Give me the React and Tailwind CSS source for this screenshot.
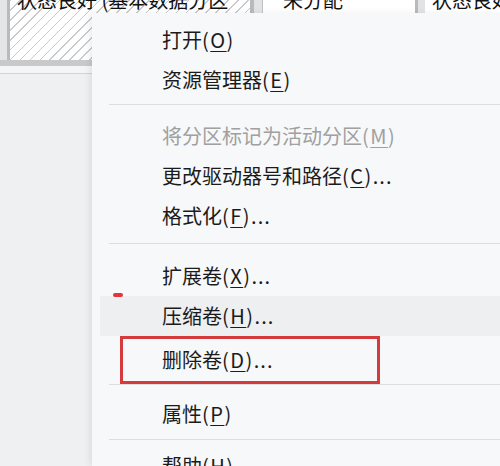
import React from "react";

const menuFont = { fontFamily: '"Noto Sans CJK SC", "Noto Sans", sans-serif' };

function Key({ k, tail = "" }) {
  return (
    <span>
      <span className="tracking-[1.5px]">
        (<span className="underline underline-offset-[3px] decoration-[1px]">{k}</span>)
      </span>
      <span className="tracking-[1px]">{tail}</span>
    </span>
  );
}

function Item({ label, k, tail = "", disabled = false, className = "" }) {
  return (
    <div
      className={`h-[40px] flex items-center pl-[70px] text-[20px] leading-none ${
        disabled ? "text-[#a0a0a0]" : "text-[#1b1b1b]"
      } ${className}`}
    >
      <span>
        {label}
        <Key k={k} tail={tail} />
      </span>
    </div>
  );
}

function Sep({ top, h }) {
  return (
    <div className={`${h} ${top} ml-[17px]`}>
      <div className="h-px bg-[#dddee0]" />
    </div>
  );
}

export default function App() {
  return (
    <div className="relative w-[500px] h-[466px] overflow-hidden bg-[#eef0f2]" style={menuFont}>
      {/* disk map underneath */}
      <div className="flex h-[60px] bg-white">
        <div className="w-[10px] bg-[#e4e5e7] border-r-[3px] border-[#b9babc]" />
        <div className="w-[240px] overflow-hidden bg-[repeating-linear-gradient(135deg,#c9cacc_0px,#c9cacc_1px,#ffffff_1px,#ffffff_7px)]">
          <div className="mt-[-10px] pl-[7px] text-[20px] leading-none whitespace-nowrap text-[#111]">
            状态良好 (基本数据分区
          </div>
        </div>
        <div className="w-[4px] bg-[#b9babc]" />
        <div className="w-[8px] bg-[#e2e3e5]" />
        <div className="w-[153px] overflow-hidden bg-white border-l border-[#c0c0c0]">
          <div className="mt-[-10px] pl-[20px] text-[20px] leading-none whitespace-nowrap text-[#111]">
            未分配
          </div>
        </div>
        <div className="w-[10px] bg-[#e2e3e5] border-l-[3px] border-[#b9babc]" />
        <div className="flex-1 overflow-hidden bg-white">
          <div className="mt-[-10px] pl-[7px] text-[20px] leading-none whitespace-nowrap text-[#111]">
            状态良好
          </div>
        </div>
      </div>
      <div className="h-[6px] bg-[#c8c9cb]" />
      <div className="h-[7px] bg-[#f4f5f6]" />
      <div className="h-px bg-[#d3d4d6]" />

      {/* context menu */}
      <div className="absolute left-[92px] top-[13px] right-0 bottom-0 bg-[#f7f8fa] shadow-[-3px_0_6px_rgba(0,0,0,0.07)] pt-[7px]">
        <Item label="打开" k="O" />
        <Item label="资源管理器" k="E" />
        <Sep h="h-[16px]" top="pt-[4px]" />
        <Item label="将分区标记为活动分区" k="M" disabled />
        <Item label="更改驱动器号和路径" k="C" tail="..." />
        <Item label="格式化" k="F" tail="..." />
        <Sep h="h-[20px]" top="pt-[7px]" />
        <Item label="扩展卷" k="X" tail="..." />
        <div className="relative">
          <Item label="压缩卷" k="H" tail="..." className="ml-[8px] !pl-[62px] bg-[#eeeff1]" />
          <div className="absolute left-[21px] top-[-3px] w-[10px] h-[4px] rounded-sm bg-[#e0353b]" />
        </div>
        <div className="h-[48px] flex">
          <div className="ml-[28px] w-[260px] h-full border-[3px] border-[#d53a3d] flex items-center pl-[39px] text-[20px] leading-none text-[#1b1b1b]">
            <span>
              删除卷
              <Key k="D" tail="..." />
            </span>
          </div>
        </div>
        <Sep h="h-[10px]" top="pt-0" />
        <Item label="属性" k="P" />
        <Sep h="h-[12px]" top="pt-[5px]" />
        <Item label="帮助" k="H" />
      </div>
    </div>
  );
}
